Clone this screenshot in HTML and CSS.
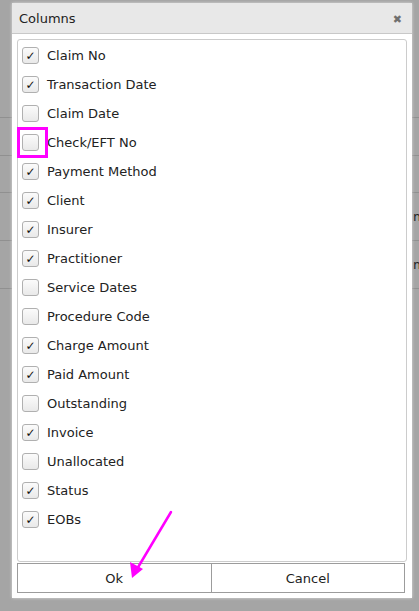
FILE: index.html
```html
<!DOCTYPE html>
<html lang="en">
<head>
  <meta charset="UTF-8" />
  <title>Columns</title>
  <link rel="stylesheet" href="styles.css">
</head>
<body>

<div class="backdrop">
  <div class="bg-row" style="height: 118px"></div>
  <div class="bg-row" style="height: 38px"></div>
  <div class="bg-row" style="height: 37px"></div>
  <div class="bg-row" style="height: 48px"><span>m</span></div>
  <div class="bg-row" style="height: 48px"><span>m</span></div>
</div>

<div class="dialog">
  <div class="dialog-title">
    <span>Columns</span>
    <span class="close">&#x2716;</span>
  </div>
  <div class="dialog-body">
    <div class="col-list">
      <label class="col-item"><span class="cb on"></span>Claim No</label>
      <label class="col-item"><span class="cb on"></span>Transaction Date</label>
      <label class="col-item"><span class="cb"></span>Claim Date</label>
      <label class="col-item"><span class="cb"></span>Check/EFT No</label>
      <label class="col-item"><span class="cb on"></span>Payment Method</label>
      <label class="col-item"><span class="cb on"></span>Client</label>
      <label class="col-item"><span class="cb on"></span>Insurer</label>
      <label class="col-item"><span class="cb on"></span>Practitioner</label>
      <label class="col-item"><span class="cb"></span>Service Dates</label>
      <label class="col-item"><span class="cb"></span>Procedure Code</label>
      <label class="col-item"><span class="cb on"></span>Charge Amount</label>
      <label class="col-item"><span class="cb on"></span>Paid Amount</label>
      <label class="col-item"><span class="cb"></span>Outstanding</label>
      <label class="col-item"><span class="cb on"></span>Invoice</label>
      <label class="col-item"><span class="cb"></span>Unallocated</label>
      <label class="col-item"><span class="cb on"></span>Status</label>
      <label class="col-item"><span class="cb on"></span>EOBs</label>
    </div>
    <div class="dialog-buttons">
      <button class="dlg-btn">Ok</button>
      <button class="dlg-btn">Cancel</button>
    </div>
  </div>
</div>

<!-- markup drawn on top: highlight box + pointer arrow -->
<svg class="marks" width="419" height="611" viewBox="0 0 419 611">
  <rect x="18.5" y="128.5" width="28" height="28" fill="none" stroke="#f0f" stroke-width="3"/>
  <line x1="171" y1="512" x2="137" y2="569" stroke="#f0f" stroke-width="2.5" stroke-linecap="round"/>
  <polygon points="132,578 130,562 143,569" fill="#f0f"/>
</svg>

</body>
</html>
```

FILE: styles.css
```css
* {
  margin: 0; padding: 0; box-sizing: border-box;
}

body {
  background: #a5a5a5;
  width: 419px;
  height: 611px;
  overflow: hidden;
  position: relative;
  font-family: 'DejaVu Sans', Verdana, sans-serif;
  font-size: 13px;
  color: #222;
}

.backdrop {
  width: 100%;
}

.bg-row {
  border-bottom: 1px solid #909090;
  display: flex;
  align-items: center;
  padding-left: 413px;
  white-space: nowrap;
  color: #222;
}

.dialog {
  position: absolute;
  left: 12px;
  top: 3px;
  width: 400px;
  height: 595px;
  background: #fff;
  box-shadow: 0 0 3px rgba(255, 255, 255, 0.6);
  display: flex;
  flex-direction: column;
}

.dialog-title {
  height: 31px;
  background: #e8e8e8;
  border-bottom: 1px solid #c8c8c8;
  display: flex;
  align-items: center;
  justify-content: space-between;
  padding: 0 10px 0 7px;
  color: #222;
}

.close {
  font-size: 11px;
  color: #707070;
  margin-top: 2px;
}

.dialog-body {
  flex: 1;
  display: flex;
  flex-direction: column;
  padding: 5px;
}

.col-list {
  flex: 1;
  border: 1px solid #ccc;
  border-radius: 3px;
  padding: 1px 4px;
}

.col-item {
  display: flex;
  align-items: center;
  height: 29px;
  gap: 8px;
}

.cb {
  width: 17px;
  height: 17px;
  border: 1px solid #b0b0b0;
  border-radius: 3px;
  background: linear-gradient(#fbfbfb, #e9e9e9);
  display: flex;
  align-items: center;
  justify-content: center;
  font-size: 12px;
  line-height: 1;
  color: #111;
}

.cb.on::after {
  content: "\2713";
}

.dialog-buttons {
  display: flex;
  height: 30px;
  margin-top: 1px;
  margin-right: 2px;
}

.dlg-btn {
  flex: 1;
  background: #fff;
  border: 1px solid #9c9c9c;
  font-family: inherit;
  font-size: 13px;
  color: #222;
}

.dlg-btn + .dlg-btn {
  border-left: none;
}

.marks {
  position: absolute;
  left: 0;
  top: 0;
}
```
